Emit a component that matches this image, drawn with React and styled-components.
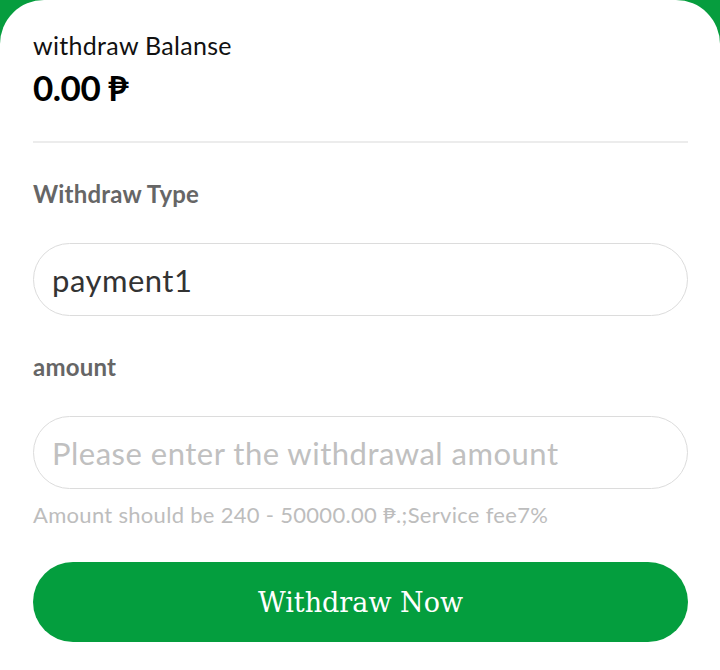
import styled, { createGlobalStyle } from "styled-components";

const GlobalStyle = createGlobalStyle`
  html, body {
    margin: 0;
    padding: 0;
    background: #069d3e;
  }
  * {
    box-sizing: border-box;
  }
`;

const Page = styled.div`
  width: 720px;
  height: 670px;
  background: #069d3e;
`;

const Card = styled.div`
  height: 100%;
  background: #fff;
  border-radius: 44px 44px 0 0;
  padding: 30px 32px 0 33px;
  font-family: Lato, "Noto Sans", sans-serif;
`;

const BalanceLabel = styled.div`
  font-size: 25px;
  line-height: 30px;
  letter-spacing: 0.3px;
  color: #111;
`;

const BalanceValue = styled.div`
  margin-top: 7px;
  font-size: 35px;
  line-height: 40px;
  font-weight: 700;
  color: #000;
  letter-spacing: -0.5px;
`;

const Divider = styled.hr`
  margin: 34px 0 0;
  border: none;
  height: 2px;
  background: #ececec;
`;

const FieldLabel = styled.div`
  margin-top: ${(p) => p.$top}px;
  font-size: 24px;
  line-height: 30px;
  font-weight: 700;
  color: #666;
  letter-spacing: 0.2px;
`;

const Field = styled.div`
  margin-top: ${(p) => p.$top}px;
  height: 73px;
  border: 1px solid #dcdcdc;
  border-radius: 37px;
  padding: 0 18px;
  display: flex;
  align-items: center;
  font-size: 31px;
  letter-spacing: 0.5px;
  color: ${(p) => (p.$placeholder ? "#c0c0c0" : "#333")};
`;

const Hint = styled.div`
  margin-top: 13px;
  font-size: 22px;
  line-height: 26px;
  letter-spacing: 0.3px;
  color: #bdbdbd;
`;

const SubmitButton = styled.button`
  margin-top: 34px;
  width: 100%;
  height: 80px;
  border: none;
  border-radius: 40px;
  background: #049e3e;
  color: #fff;
  font-family: "DejaVu Serif", serif;
  font-size: 27px;
  cursor: pointer;
`;

export default function App() {
  return (
    <Page>
      <GlobalStyle />
      <Card>
        <BalanceLabel>withdraw Balanse</BalanceLabel>
        <BalanceValue>0.00 ₱</BalanceValue>
        <Divider />
        <FieldLabel $top={36}>Withdraw Type</FieldLabel>
        <Field $top={34}>payment1</Field>
        <FieldLabel $top={36}>amount</FieldLabel>
        <Field $top={34} $placeholder>
          Please enter the withdrawal amount
        </Field>
        <Hint>Amount should be 240 - 50000.00 ₱.;Service fee7%</Hint>
        <SubmitButton>Withdraw Now</SubmitButton>
      </Card>
    </Page>
  );
}
